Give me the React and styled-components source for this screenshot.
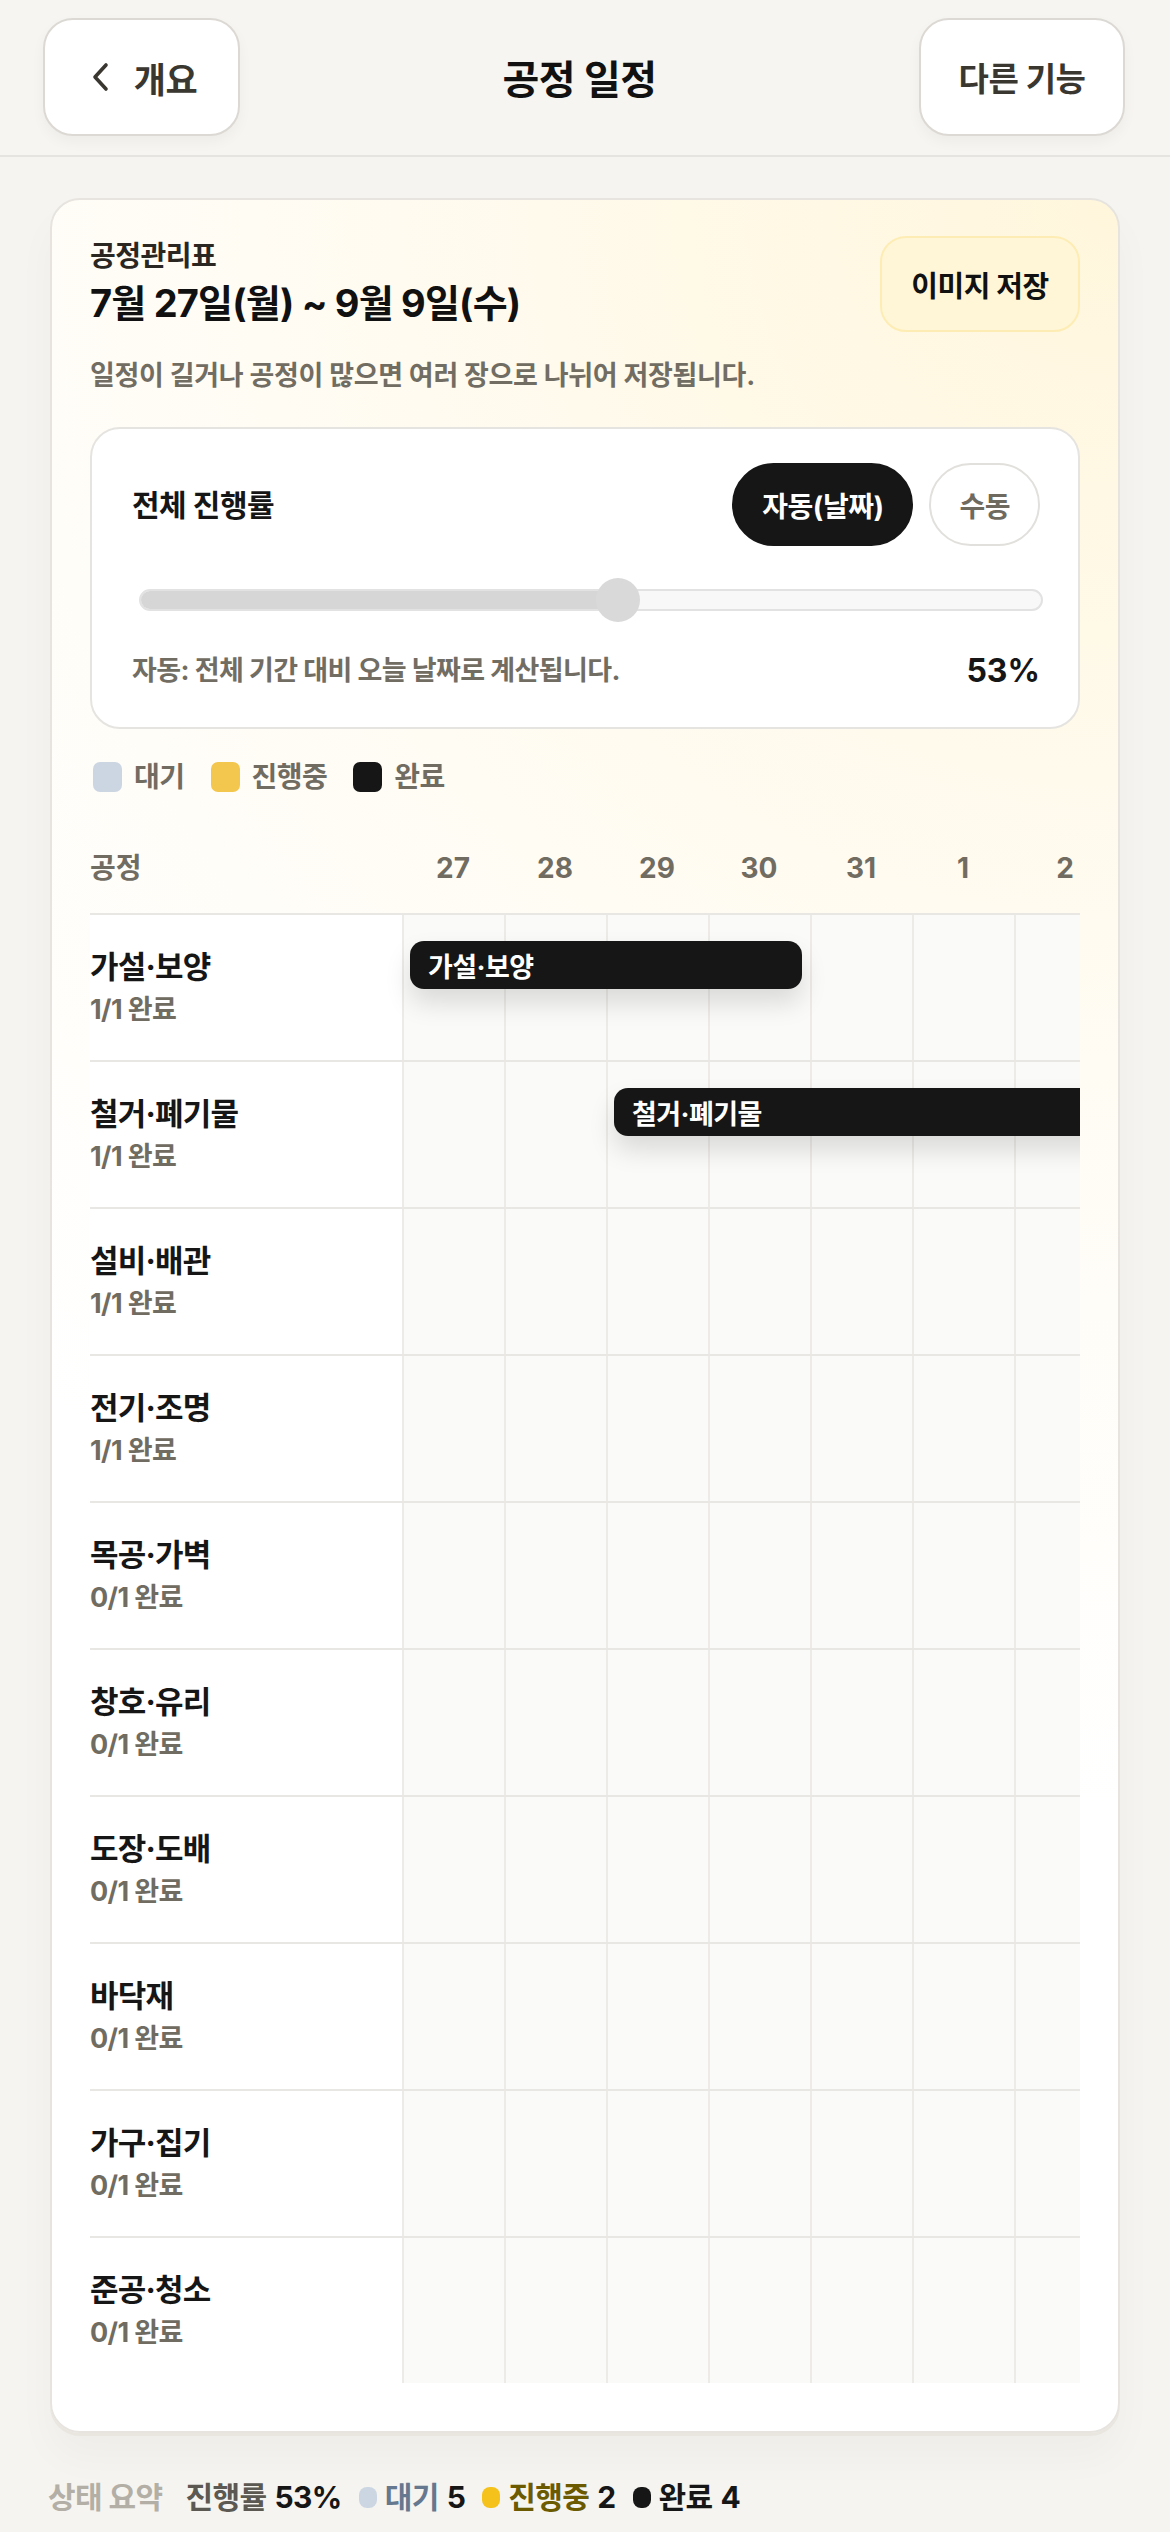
import React from 'react'
import styled, { createGlobalStyle } from 'styled-components'

const FONT = `Inter, "Noto Sans CJK KR", "Noto Sans", "Liberation Sans", sans-serif`
const DAY_W = 102
const NAME_W = 312

const DAYS = ['27', '28', '29', '30', '31', '1', '2']

const TASKS = [
  { name: '가설·보양', done: '1/1 완료', bar: { start: 0, span: 4 } },
  { name: '철거·폐기물', done: '1/1 완료', bar: { start: 2, span: 8 } },
  { name: '설비·배관', done: '1/1 완료' },
  { name: '전기·조명', done: '1/1 완료' },
  { name: '목공·가벽', done: '0/1 완료' },
  { name: '창호·유리', done: '0/1 완료' },
  { name: '도장·도배', done: '0/1 완료' },
  { name: '바닥재', done: '0/1 완료' },
  { name: '가구·집기', done: '0/1 완료' },
  { name: '준공·청소', done: '0/1 완료' },
]

const STATUS = {
  wait: { swatch: '#ccd6e2', text: '#66788f' },
  doing: { swatch: '#f3c64d', text: '#6b5a00' },
  done: { swatch: '#161616', text: '#161616' },
}

const GlobalStyle = createGlobalStyle`
  body {
    margin: 0;
    background: #f5f4f0;
    font-family: ${FONT};
    color: #161616;
  }
`

function App() {
  return (
    <>
      <GlobalStyle />
      <Page>
        <TopBar>
          <NavButton>
            <svg width="20" height="30" viewBox="0 0 20 30" fill="none">
              <path d="M16 3 L5 15 L16 27" stroke="#3a3731" strokeWidth="3.6" strokeLinecap="round" strokeLinejoin="round" />
            </svg>
            개요
          </NavButton>
          <PageTitle>공정 일정</PageTitle>
          <NavButton $wide>다른 기능</NavButton>
        </TopBar>

        <Card>
          <CardHead>
            <div>
              <Eyebrow>공정관리표</Eyebrow>
              <DateRange>7월 27일(월) ~ 9월 9일(수)</DateRange>
            </div>
            <SaveButton>이미지 저장</SaveButton>
          </CardHead>
          <Note>일정이 길거나 공정이 많으면 여러 장으로 나뉘어 저장됩니다.</Note>

          <ProgressPanel>
            <PanelRow>
              <PanelTitle>전체 진행률</PanelTitle>
              <Toggle>
                <Pill $active>자동(날짜)</Pill>
                <Pill>수동</Pill>
              </Toggle>
            </PanelRow>
            <Slider>
              <Track>
                <Fill style={{ width: '53%' }} />
              </Track>
              <Thumb style={{ left: '53%' }} />
            </Slider>
            <PanelRow>
              <Hint>자동: 전체 기간 대비 오늘 날짜로 계산됩니다.</Hint>
              <Percent>53%</Percent>
            </PanelRow>
          </ProgressPanel>

          <Legend>
            <LegendItem><Swatch $color={STATUS.wait.swatch} />대기</LegendItem>
            <LegendItem><Swatch $color={STATUS.doing.swatch} />진행중</LegendItem>
            <LegendItem><Swatch $color={STATUS.done.swatch} />완료</LegendItem>
          </Legend>

          <Chart>
            <HeadRow>
              <HeadCell $left>공정</HeadCell>
              {DAYS.map((d) => (
                <HeadCell key={d}>{d}</HeadCell>
              ))}
            </HeadRow>
            {TASKS.map((t) => (
              <TaskRow key={t.name}>
                <NameCell>
                  <TaskName>{t.name}</TaskName>
                  <TaskDone>{t.done}</TaskDone>
                </NameCell>
                {DAYS.map((d) => (
                  <DayCell key={d} />
                ))}
                {t.bar && (
                  <Bar
                    style={{
                      left: NAME_W + t.bar.start * DAY_W + 8,
                      width: t.bar.span * DAY_W - 16,
                    }}
                  >
                    {t.name}
                  </Bar>
                )}
              </TaskRow>
            ))}
          </Chart>
        </Card>

        <Summary>
          <SumLabel>상태 요약</SumLabel>
          <SumItem $color="#5c5852">진행률 <b>53%</b></SumItem>
          <SumItem $color={STATUS.wait.text}><Dot $color={STATUS.wait.swatch} />대기 <b>5</b></SumItem>
          <SumItem $color={STATUS.doing.text}><Dot $color="#f5c21b" />진행중 <b>2</b></SumItem>
          <SumItem $color={STATUS.done.text}><Dot $color={STATUS.done.swatch} />완료 <b>4</b></SumItem>
        </Summary>
      </Page>
    </>
  )
}

const Page = styled.div`
  width: 1170px;
  min-height: 2532px;
`

const TopBar = styled.header`
  display: flex;
  align-items: center;
  justify-content: space-between;
  height: 157px;
  box-sizing: border-box;
  padding: 19px 45px 20px 43px;
  background: #f6f5f1;
  border-bottom: 2px solid #e6e4e0;
`

const NavButton = styled.button`
  display: flex;
  align-items: center;
  justify-content: center;
  gap: ${(p) => (p.$wide ? '0' : '24px')};
  width: ${(p) => (p.$wide ? '206px' : '197px')};
  height: 118px;
  padding: 0 0 0 ${(p) => (p.$wide ? '0' : '4px')};
  background: #fff;
  border: 2px solid #dcd9d4;
  border-radius: 30px;
  box-shadow: 0 6px 14px rgba(0, 0, 0, 0.04);
  font-family: ${FONT};
  font-size: ${(p) => (p.$wide ? '33px' : '35px')};
  font-weight: 700;
  color: #3a3731;
  letter-spacing: -0.5px;
`

const PageTitle = styled.h1`
  margin: 0;
  font-size: 40px;
  font-weight: 700;
  letter-spacing: -0.5px;
  color: #111;
`

const Card = styled.section`
  margin: 41px 50px 0;
  padding: 40px 38px 48px;
  border: 2px solid #e7e4df;
  border-radius: 30px;
  background: radial-gradient(circle at 100% 0%, #fff6dc 0%, #fffcf4 35%, #ffffff 65%);
  box-shadow: 0 3px 0 #e9e6e0, 0 24px 40px rgba(0, 0, 0, 0.03);
`

const CardHead = styled.div`
  display: flex;
  justify-content: space-between;
  align-items: flex-start;
`

const Eyebrow = styled.div`
  font-size: 28px;
  line-height: 32px;
  font-weight: 700;
  letter-spacing: -0.5px;
  color: #2a2723;
`

const DateRange = styled.div`
  margin-top: 8px;
  font-size: 38px;
  line-height: 46px;
  font-weight: 700;
  letter-spacing: -0.8px;
  color: #111;
`

const SaveButton = styled.button`
  width: 200px;
  height: 96px;
  margin-top: -4px;
  background: #fff6d8;
  border: 2px solid #fdedb4;
  border-radius: 26px;
  font-family: ${FONT};
  font-size: 29px;
  font-weight: 700;
  letter-spacing: -0.5px;
  color: #111;
`

const Note = styled.p`
  margin: 27px 0 0;
  font-size: 27px;
  line-height: 34px;
  font-weight: 700;
  letter-spacing: -0.3px;
  color: #726d63;
`

const ProgressPanel = styled.div`
  margin-top: 34px;
  padding: 34px 38px 39px 40px;
  background: #fff;
  border: 2px solid #e6e4e0;
  border-radius: 30px;
`

const PanelRow = styled.div`
  display: flex;
  align-items: center;
  justify-content: space-between;
`

const PanelTitle = styled.div`
  font-size: 30px;
  line-height: 38px;
  font-weight: 700;
  letter-spacing: -0.5px;
  color: #161616;
`

const Toggle = styled.div`
  display: flex;
  gap: 16px;
`

const Pill = styled.button`
  height: 83px;
  padding: 0 28px;
  border-radius: 42px;
  border: 2px solid ${(p) => (p.$active ? '#161616' : '#e2e0dc')};
  background: ${(p) => (p.$active ? '#161616' : '#fff')};
  color: ${(p) => (p.$active ? '#fff' : '#6f6a60')};
  font-family: ${FONT};
  font-size: 28px;
  font-weight: 700;
  letter-spacing: -0.5px;
`

const Slider = styled.div`
  position: relative;
  height: 44px;
  margin: 32px -3px 32px 7px;
  display: flex;
  align-items: center;
`

const Track = styled.div`
  position: relative;
  width: 100%;
  height: 22px;
  box-sizing: border-box;
  border: 2px solid #e2e2e2;
  border-radius: 11px;
  background: #f8f8f8;
  overflow: hidden;
`

const Fill = styled.div`
  height: 100%;
  background: #d6d6d6;
`

const Thumb = styled.div`
  position: absolute;
  top: 0;
  width: 44px;
  height: 44px;
  margin-left: -22px;
  border-radius: 50%;
  background: #d9d9d9;
`

const Hint = styled.div`
  font-size: 27px;
  line-height: 34px;
  font-weight: 700;
  letter-spacing: -0.6px;
  color: #726d63;
`

const Percent = styled.div`
  font-size: 32px;
  line-height: 34px;
  font-weight: 700;
  color: #161616;
`

const Legend = styled.div`
  display: flex;
  align-items: center;
  gap: 26px;
  margin-top: 33px;
  padding-left: 3px;
`

const LegendItem = styled.div`
  display: flex;
  align-items: center;
  gap: 12px;
  font-size: 28px;
  line-height: 30px;
  font-weight: 700;
  letter-spacing: -0.5px;
  color: #716c62;
`

const Swatch = styled.span`
  width: 29px;
  height: 30px;
  border-radius: 7px;
  background: ${(p) => p.$color};
`

const Chart = styled.div`
  overflow: hidden;
`

const HeadRow = styled.div`
  display: grid;
  grid-template-columns: ${NAME_W}px repeat(${DAYS.length}, ${DAY_W}px);
  align-items: end;
  height: 121px;
  box-sizing: border-box;
  padding-bottom: 27px;
`

const HeadCell = styled.div`
  font-size: 28px;
  line-height: 36px;
  font-weight: 700;
  color: #716c62;
  text-align: ${(p) => (p.$left ? 'left' : 'center')};
`

const TaskRow = styled.div`
  position: relative;
  display: grid;
  grid-template-columns: ${NAME_W}px repeat(${DAYS.length}, ${DAY_W}px);
  height: 147px;
  box-sizing: border-box;
  border-top: 2px solid #e9e7e4;
  width: ${NAME_W + DAYS.length * DAY_W}px;
`

const NameCell = styled.div`
  padding-top: 33px;
  background: #fff;
`

const TaskName = styled.div`
  font-size: 31px;
  line-height: 38px;
  font-weight: 700;
  letter-spacing: -0.8px;
  color: #161616;
`

const TaskDone = styled.div`
  margin-top: 7px;
  font-size: 27px;
  line-height: 34px;
  font-weight: 700;
  letter-spacing: -0.6px;
  color: #716c62;
`

const DayCell = styled.div`
  background: #fafaf8;
  border-left: 2px solid #ecebe8;
`

const Bar = styled.div`
  position: absolute;
  top: 26px;
  z-index: 1;
  height: 48px;
  box-sizing: border-box;
  padding-left: 18px;
  display: flex;
  align-items: center;
  border-radius: 14px;
  background: #161616;
  box-shadow: 0 14px 26px rgba(0, 0, 0, 0.13);
  font-size: 27px;
  font-weight: 700;
  letter-spacing: -0.6px;
  color: #fff;
  white-space: nowrap;
`

const Summary = styled.div`
  display: flex;
  align-items: center;
  gap: 17px;
  margin-top: 45px;
  padding: 0 48px;
  font-size: 30px;
  line-height: 38px;
  font-weight: 700;
  letter-spacing: -0.6px;
`

const SumLabel = styled.span`
  color: #b3aea6;
  margin-right: 6px;
`

const SumItem = styled.span`
  display: flex;
  align-items: center;
  gap: 8px;
  color: ${(p) => p.$color};

  b {
    color: #161616;
    font-weight: 700;
  }
`

const Dot = styled.span`
  width: 18px;
  height: 21px;
  border-radius: 8px;
  background: ${(p) => p.$color};
`

export default App
